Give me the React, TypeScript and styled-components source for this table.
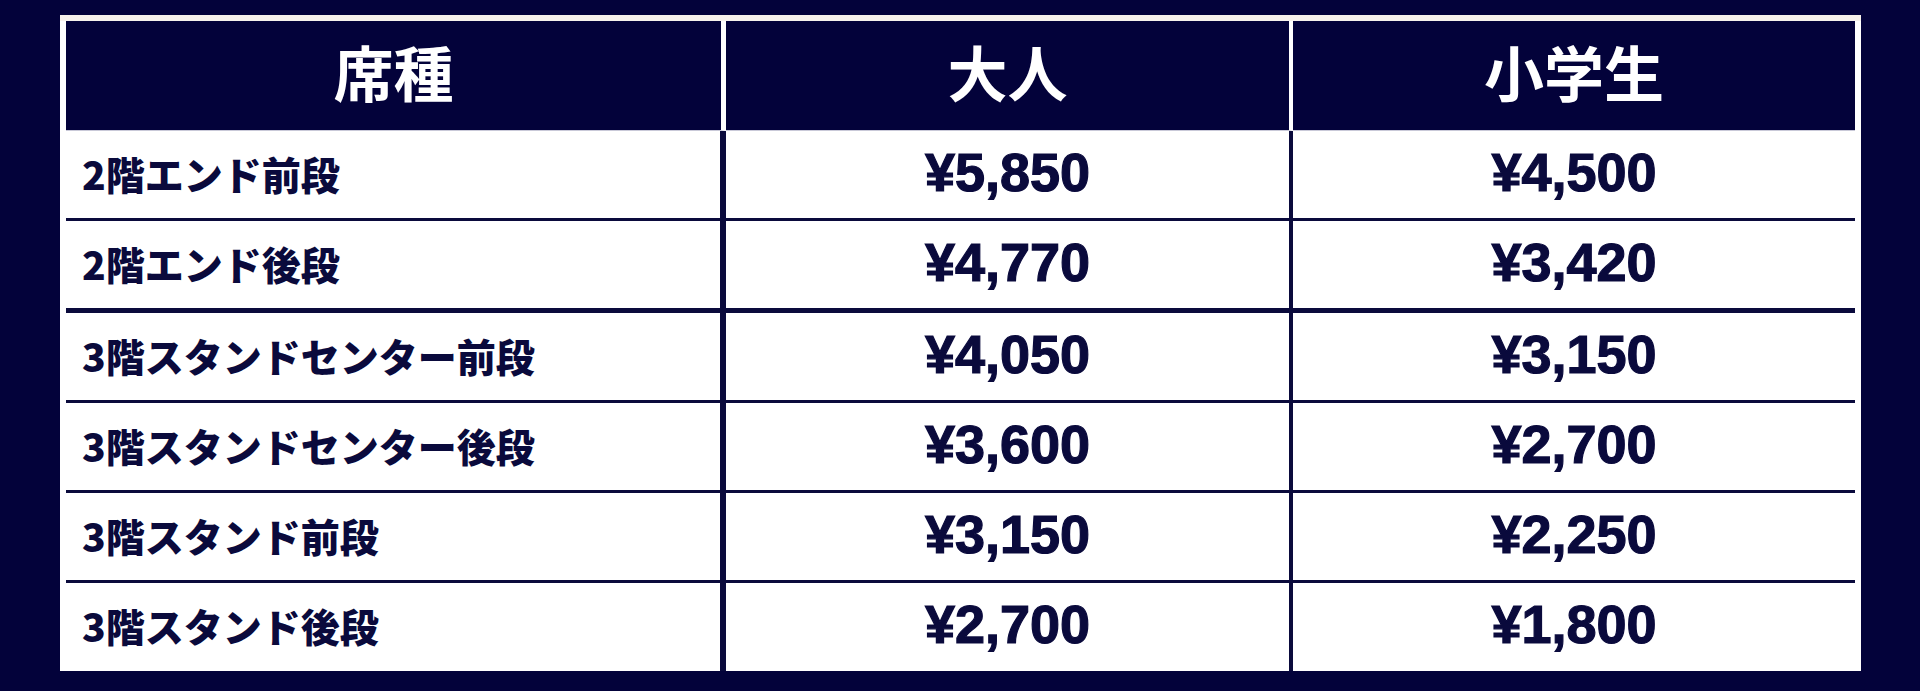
import React from "react";
import styled, { createGlobalStyle } from "styled-components";

const NAVY = "#03023a";
const INK = "#0a0a3c";

const GlobalStyle = createGlobalStyle`
  html, body { margin: 0; padding: 0; background: ${NAVY}; }
  #root { min-height: 691px; }
  * { box-sizing: border-box; }
`;

const Page = styled.div`
  width: 1920px;
  height: 691px;
  background: ${NAVY};
  padding: 15px 59px 0 60px;
  overflow: hidden;
`;

const Frame = styled.div`
  background: #ffffff;
  border-top: 6px solid #f7f2ec;
  padding: 0 6px 0 6px;
`;

const Table = styled.div`
  display: grid;
  grid-template-columns: 660px 567px 562px;
`;

const HeaderCell = styled.div<{ $divider?: number }>`
  height: 110px;
  background: ${NAVY};
  border-right: ${(p) => (p.$divider ? `${p.$divider}px solid #ffffff` : "none")};
  border-bottom: 1px solid #c9c9d8;
  display: flex;
  align-items: center;
  justify-content: center;
  color: #ffffff;
  font-family: "Noto Sans CJK JP", "Noto Sans", sans-serif;
  font-weight: 700;
  font-size: 60px;
  line-height: 1;
  padding-bottom: 9px;
`;

const BodyCell = styled.div<{ $divider?: number; $rule: number; $height: number }>`
  height: ${(p) => p.$height + p.$rule}px;
  background: #ffffff;
  border-right: ${(p) => (p.$divider ? `${p.$divider}px solid ${INK}` : "none")};
  border-bottom: ${(p) => (p.$rule ? `${p.$rule}px solid ${INK}` : "none")};
  display: flex;
  align-items: center;
  color: ${INK};
  line-height: 1;
`;

const LabelCell = styled(BodyCell)`
  padding-left: 16px;
  padding-bottom: 3px;
  font-family: "Noto Sans CJK JP", "Noto Sans", sans-serif;
  font-weight: 900;
  font-size: 39px;
`;

const PriceCell = styled(BodyCell)`
  justify-content: center;
  padding-bottom: 6px;
  font-family: "Liberation Sans", Arial, sans-serif;
  font-weight: 700;
  font-size: 54px;
  -webkit-text-stroke: 1.2px ${INK};
`;

type Row = { seat: string; adult: string; child: string };

const rows: Row[] = [
  { seat: "2階エンド前段", adult: "¥5,850", child: "¥4,500" },
  { seat: "2階エンド後段", adult: "¥4,770", child: "¥3,420" },
  { seat: "3階スタンドセンター前段", adult: "¥4,050", child: "¥3,150" },
  { seat: "3階スタンドセンター後段", adult: "¥3,600", child: "¥2,700" },
  { seat: "3階スタンド前段", adult: "¥3,150", child: "¥2,250" },
  { seat: "3階スタンド後段", adult: "¥2,700", child: "¥1,800" },
];

export default function App() {
  return (
    <>
      <GlobalStyle />
      <Page>
        <Frame>
          <Table>
            <HeaderCell $divider={5}>席種</HeaderCell>
            <HeaderCell $divider={4}>大人</HeaderCell>
            <HeaderCell>小学生</HeaderCell>
            {rows.map((r, i) => {
              const last = i === rows.length - 1;
              const rule = last ? 0 : i === 1 ? 5 : 3;
              const height = last ? 88 : 87;
              return (
                <React.Fragment key={r.seat}>
                  <LabelCell $divider={6} $rule={rule} $height={height}>
                    {r.seat}
                  </LabelCell>
                  <PriceCell $divider={4} $rule={rule} $height={height}>
                    {r.adult}
                  </PriceCell>
                  <PriceCell $rule={rule} $height={height}>
                    {r.child}
                  </PriceCell>
                </React.Fragment>
              );
            })}
          </Table>
        </Frame>
      </Page>
    </>
  );
}
